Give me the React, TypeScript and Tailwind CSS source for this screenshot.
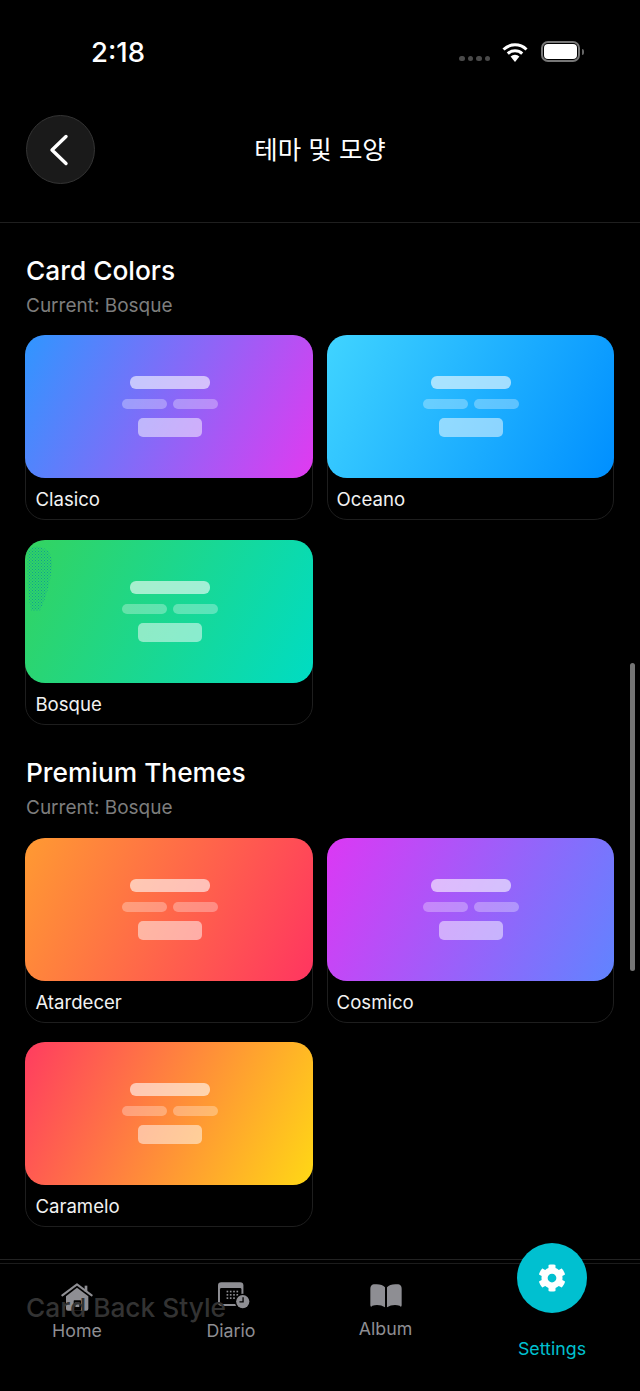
import { FaCog } from "react-icons/fa";

type Theme = {
  name: string;
  gradient: string;
  speckle?: boolean;
};

const cardColors: Theme[] = [
  { name: "Clasico", gradient: "bg-linear-[116deg,#2f96ff,#e13af0]" },
  { name: "Oceano", gradient: "bg-linear-[116deg,#40d4ff,#008fff]" },
  { name: "Bosque", gradient: "bg-linear-[116deg,#34d35f,#00dcc3]", speckle: true },
];

const premiumThemes: Theme[] = [
  { name: "Atardecer", gradient: "bg-linear-[116deg,#ff9a32,#ff3560]" },
  { name: "Cosmico", gradient: "bg-linear-[116deg,#dc38f4,#6084ff]" },
  { name: "Caramelo", gradient: "bg-linear-[116deg,#ff3c60,#ffd815]" },
];

const StatusBar = () => (
  <div className="flex h-[104px] items-start justify-between pl-[91px] pr-[56px] pt-[36px]">
    <span className="text-[27.5px] font-medium leading-[32px] text-white">2:18</span>
    <div className="flex items-start pt-[5px]">
      <div className="mr-[12px] mt-[15px] flex gap-[3px]">
        <span className="h-[5px] w-[5.5px] rounded-full bg-[#4a4a4a]" />
        <span className="h-[5px] w-[5.5px] rounded-full bg-[#4a4a4a]" />
        <span className="h-[5px] w-[5.5px] rounded-full bg-[#4a4a4a]" />
        <span className="h-[5px] w-[5.5px] rounded-full bg-[#4a4a4a]" />
      </div>
      <svg width="26" height="20" viewBox="0 0 26 20" className="mt-px">
        <path d="M1.5 7.5a16.5 16.5 0 0 1 23 0" fill="none" stroke="white" strokeWidth="3" />
        <path d="M5.8 11.6a10.4 10.4 0 0 1 14.4 0" fill="none" stroke="white" strokeWidth="3" />
        <path d="M8.6 14.6a6.4 6.4 0 0 1 8.8 0L13 20z" fill="white" />
      </svg>
      <div className="ml-[13px] flex items-center">
        <div className="flex h-[21px] w-[39px] items-center justify-center rounded-[7px] border-2 border-[#777777]">
          <div className="h-[15px] w-[33px] rounded-[4px] bg-white" />
        </div>
        <span className="ml-[2px] h-[6px] w-[2px] rounded-r-sm bg-[#666666]" />
      </div>
    </div>
  </div>
);

const Header = () => (
  <header className="relative flex items-center border-b border-[#1f1f1f] pb-[38px] pl-[26px] pt-[11px]">
    <button className="flex h-[69px] w-[69px] items-center justify-center rounded-full border border-[#343434] bg-[#1a1a1a]">
      <svg width="20" height="32" viewBox="0 0 20 32" className="-ml-[4px]">
        <path
          d="M17 2.5 3 16l14 13.5"
          fill="none"
          stroke="white"
          strokeWidth="3.4"
          strokeLinecap="round"
          strokeLinejoin="round"
        />
      </svg>
    </button>
    <h1 className="flex-1 pr-[95px] text-center text-[25.5px] font-normal leading-[32px] text-white">
      테마 및 모양
    </h1>
  </header>
);

const Speckle = () => (
  <svg width="28" height="70" viewBox="0 0 28 70" className="absolute left-[1px] top-[5px]">
    <defs>
      <pattern id="speckle" width="3" height="3" patternUnits="userSpaceOnUse">
        <rect width="1" height="1" fill="#109f90" />
        <rect x="1.5" y="1.5" width="1" height="1" fill="#109f90" />
      </pattern>
    </defs>
    <path d="M1 6Q6 0 14 2Q26 4 26 20Q24 44 14 66L5 66Q0 40 1 6Z" fill="url(#speckle)" />
  </svg>
);

const ThemeCard = ({ theme }: { theme: Theme }) => (
  <div className="h-[185px] rounded-[20px] border border-[#1e1e1e]">
    <div
      className={`relative -m-px flex h-[143px] flex-col items-center justify-center rounded-[20px] pl-[2px] ${theme.gradient}`}
    >
      {theme.speckle && <Speckle />}
      <div className="h-[13px] w-[80px] rounded-[6px] bg-white/60" />
      <div className="mt-[10px] flex gap-[6px]">
        <div className="h-[10px] w-[45px] rounded-[5px] bg-white/30" />
        <div className="h-[10px] w-[45px] rounded-[5px] bg-white/30" />
      </div>
      <div className="mt-[9px] h-[19px] w-[64px] rounded-[5px] bg-white/50" />
    </div>
    <p className="pl-[9px] pt-[10px] text-[18.6px] leading-[24px] text-[#f2f2f2]">{theme.name}</p>
  </div>
);

const ThemeSection = ({ title, themes, className }: { title: string; themes: Theme[]; className?: string }) => (
  <section className={className}>
    <h2 className="text-[26.3px] font-[550] leading-[30px] text-white">{title}</h2>
    <p className="mt-[8px] text-[19px] leading-[24px] text-[#7d7d7d]">Current: Bosque</p>
    <div className="-ml-[0.6px] mt-[17.4px] grid grid-cols-[287.6px_287.6px] gap-x-[13.6px] gap-y-[19.6px]">
      {themes.map((theme) => (
        <ThemeCard key={theme.name} theme={theme} />
      ))}
    </div>
  </section>
);

const HomeIcon = () => (
  <svg width="32" height="28" viewBox="0 0 94 84">
    <path d="M3 37 47 4l44 33" fill="none" stroke="#8e8e93" strokeWidth="6" strokeLinecap="round" strokeLinejoin="round" />
    <rect x="70" y="8" width="8" height="18" fill="#8e8e93" />
    <path d="M14 40 47 14l34 26v37q0 6-6 6H20q-6 0-6-6z" fill="#8e8e93" />
    <rect x="37" y="52" width="22" height="31" rx="2" fill="#000" />
    <rect x="42" y="58" width="12" height="14" fill="#8e8e93" />
  </svg>
);

const DiarioIcon = () => (
  <svg width="33" height="28" viewBox="0 0 100 84">
    <rect width="77" height="72" rx="10" fill="#8e8e93" />
    <rect x="6" y="18" width="65" height="48" rx="4" fill="#000" />
    {[0, 1, 2].map((row) =>
      [0, 1, 2, 3].map((col) => (
        <rect key={`${row}-${col}`} x={26 + col * 10} y={26 + row * 10} width="5" height="5" fill="#8e8e93" />
      ))
    )}
    <circle cx="75" cy="59" r="24" fill="#000" />
    <circle cx="75" cy="59" r="20" fill="#8e8e93" />
    <path d="M76 46v14H65" fill="none" stroke="#000" strokeWidth="4" />
  </svg>
);

const AlbumIcon = () => (
  <svg width="32" height="24" viewBox="0 0 94 72">
    <path d="M0 14Q0 3 10 1 34-2 44 10V70Q28 60 6 65 1 72 0 64Z" fill="#8e8e93" />
    <path d="M94 14Q94 3 84 1 60-2 50 10V70Q66 60 88 65 93 72 94 64Z" fill="#8e8e93" />
  </svg>
);

const TabBar = () => (
  <nav className="absolute inset-x-0 bottom-0 top-[1259px] border-t border-[#222222] bg-black">
    <div className="mt-[3px] border-t border-[#1c1c1c]" />
    <div className="-mt-[4px] grid grid-cols-[154px_154px_155px_178px]">
      <div className="flex flex-col items-center pt-[23px]">
        <HomeIcon />
        <span className="mt-[10px] text-[17.8px] leading-[20px] text-[#8e8e93]">Home</span>
      </div>
      <div className="flex flex-col items-center pt-[22px]">
        <div className="pl-[6px]">
          <DiarioIcon />
        </div>
        <span className="mt-[11px] text-[17.8px] leading-[20px] text-[#8e8e93]">Diario</span>
      </div>
      <div className="flex flex-col items-center pt-[24px]">
        <AlbumIcon />
        <span className="mt-[11px] text-[17.8px] leading-[20px] text-[#8e8e93]">Album</span>
      </div>
      <div className="flex flex-col items-center">
        <div className="-mt-[17px] flex h-[70px] w-[70px] items-center justify-center rounded-full bg-[#00c0d0]">
          <FaCog className="h-[28px] w-[28px] text-white" />
        </div>
        <span className="mt-[26px] text-[17.8px] leading-[20px] text-[#00c0d0]">Settings</span>
      </div>
    </div>
  </nav>
);

const App = () => {
  return (
    <div className="relative h-[1391px] w-[640px] overflow-hidden bg-black font-['Inter','Noto_Sans_CJK_KR',sans-serif]">
      <StatusBar />
      <Header />
      <main className="px-[26px] pt-[32.6px]">
        <ThemeSection title="Card Colors" themes={cardColors} />
        <ThemeSection title="Premium Themes" themes={premiumThemes} className="mt-[33.6px]" />
        {/* sits on top of the tab bar, dimmed, like the scrolled content in the shot */}
        <h2 className="relative z-10 mt-[66px] text-[26.3px] font-[550] leading-[30px] text-[#333333]">
          Card Back Style
        </h2>
      </main>
      <div className="absolute left-[630px] top-[663px] h-[308px] w-[5px] rounded-full bg-[#757575]" />
      <TabBar />
    </div>
  );
};

export default App;
